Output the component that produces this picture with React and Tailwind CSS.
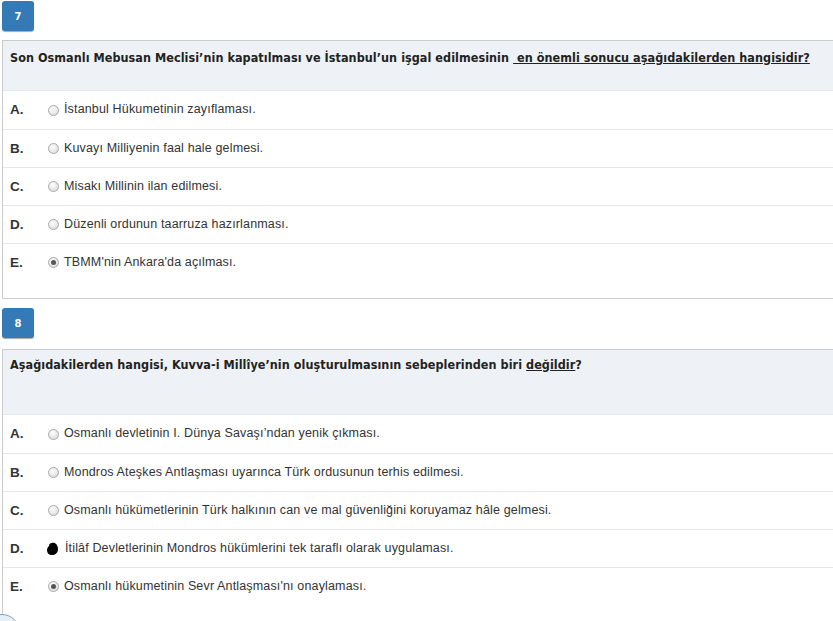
import React from "react";

const Radio = ({ checked, blob }) => {
  if (blob) {
    return (
      <svg width="13" height="14" viewBox="0 0 13 14" className="shrink-0 -ml-[2px] mr-[1px]">
        <path d="M6 1 C9 0 12 3 12 7 C12 11 9 13 6 13 C3 13 1 11 1 8 C1 6 2 5 3 4 C3 2 4 1 6 1 Z" fill="#000" />
      </svg>
    );
  }
  return (
    <span className="shrink-0 w-[11px] h-[11px] rounded-full border border-[#a9a9a9] bg-[radial-gradient(circle_at_40%_35%,#ffffff,#d4d4d4)] flex items-center justify-center">
      {checked && <span className="w-[5px] h-[5px] rounded-full bg-[#555]" />}
    </span>
  );
};

const Badge = ({ n }) => (
  <div className="ml-[2px] w-[32px] h-[30px] rounded-[3px] bg-[#337ab7] shadow-[0_1px_1px_rgba(0,0,0,0.35)] flex items-center justify-center text-white font-bold text-[10px] font-['DejaVu_Sans',sans-serif]">
    {n}
  </div>
);

const Row = ({ letter, children, checked, blob, first }) => (
  <div className={`flex items-center h-[38px] ${first ? "" : "border-t border-[#e6e6e6]"}`}>
    <div className="w-[45px] pl-[7px] font-bold text-[13.5px] text-[#333] font-['Liberation_Sans',Arial,sans-serif] pt-[1px]">{letter}</div>
    <Radio checked={checked} blob={blob} />
    <div className="ml-[5px] text-[12.5px] tracking-[0.15px] text-[#333] font-['Liberation_Sans',Arial,sans-serif] -mt-[1px]">{children}</div>
  </div>
);

const qCls =
  "bg-[#eef2f6] border-b border-[#e4e8ec] pl-[7px] text-[12.5px] font-bold text-[#222] font-['DejaVu_Sans_Condensed','DejaVu_Sans',sans-serif] font-stretch-condensed whitespace-nowrap tracking-[0.05px]";

export default function App() {
  return (
    <div className="w-[833px] h-[621px] overflow-hidden bg-white relative font-['Liberation_Sans',Arial,sans-serif]">
      <div className="pt-[1px]">
        <Badge n="7" />
        <div className="mt-[9px] ml-[2px] w-[850px] border border-[#cccccc] pb-[17px]">
          <div className={`h-[50px] pt-[8px] ${qCls}`}>
            Son Osmanlı Mebusan Meclisi’nin kapatılması ve İstanbul’un işgal edilmesinin <span className="underline">&nbsp;en önemli sonucu aşağıdakilerden hangisidir?</span>
          </div>
          <Row letter="A." first>İstanbul Hükumetinin zayıflaması.</Row>
          <Row letter="B.">Kuvayı Milliyenin faal hale gelmesi.</Row>
          <Row letter="C.">Misakı Millinin ilan edilmesi.</Row>
          <Row letter="D.">Düzenli ordunun taarruza hazırlanması.</Row>
          <Row letter="E." checked>TBMM'nin Ankara'da açılması.</Row>
        </div>
        <div className="mt-[9px]">
          <Badge n="8" />
        </div>
        <div className="mt-[11px] ml-[2px] w-[850px] border border-[#cccccc] pb-[40px]">
          <div className={`h-[65px] pt-[6px] ${qCls}`}>
            Aşağıdakilerden hangisi, Kuvva-i Millîye’nin oluşturulmasının sebeplerinden biri <span className="underline">değildir</span>?
          </div>
          <Row letter="A." first>Osmanlı devletinin I. Dünya Savaşı’ndan yenik çıkması.</Row>
          <Row letter="B.">Mondros Ateşkes Antlaşması uyarınca Türk ordusunun terhis edilmesi.</Row>
          <Row letter="C.">Osmanlı hükümetlerinin Türk halkının can ve mal güvenliğini koruyamaz hâle gelmesi.</Row>
          <Row letter="D." blob>İtilâf Devletlerinin Mondros hükümlerini tek taraflı olarak uygulaması.</Row>
          <Row letter="E." checked>Osmanlı hükumetinin Sevr Antlaşması'nı onaylaması.</Row>
        </div>
      </div>
      <div className="absolute left-[-16px] top-[614px] w-[36px] h-[36px] rounded-full border border-[#8a9cb0] bg-[#e6eef7]" />
    </div>
  );
}
